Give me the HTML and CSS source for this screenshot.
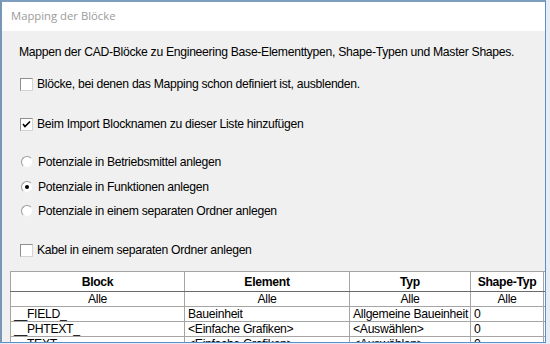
FILE: index.html
```html
<!DOCTYPE html>
<html lang="de">
<head>
  <meta charset="UTF-8" />
  <title>Mapping der Blöcke</title>
  <link rel="stylesheet" href="styles.css">
</head>
<body>
  <div class="window">
    <div class="titlebar">Mapping der Blöcke</div>

    <div class="content">
      <p class="intro">Mappen der CAD-Blöcke zu Engineering Base-Elementtypen, Shape-Typen und Master Shapes.</p>

      <label class="option opt-hide"><span class="checkbox"></span>Blöcke, bei denen das Mapping schon definiert ist, ausblenden.</label>

      <label class="option opt-import">
        <span class="checkbox">
          <svg width="11" height="11" viewBox="0 0 11 11"><path d="M2 5 L4 7.5 L9 2.5" fill="none" stroke="#000" stroke-width="1.6"/></svg>
        </span>Beim Import Blocknamen zu dieser Liste hinzufügen
      </label>

      <label class="option opt-r1"><span class="radio"></span>Potenziale in Betriebsmittel anlegen</label>
      <label class="option opt-r2"><span class="radio checked"></span>Potenziale in Funktionen anlegen</label>
      <label class="option opt-r3"><span class="radio"></span>Potenziale in einem separaten Ordner anlegen</label>

      <label class="option opt-kabel"><span class="checkbox"></span>Kabel in einem separaten Ordner anlegen</label>

      <div class="grid-wrap">
        <table class="grid">
          <colgroup>
            <col style="width:174px">
            <col style="width:165px">
            <col style="width:121px">
            <col style="width:73px">
            <col style="width:80px">
          </colgroup>
          <thead>
            <tr>
              <th>Block</th>
              <th>Element</th>
              <th>Typ</th>
              <th>Shape-Typ</th>
              <th class="cut">Master</th>
            </tr>
          </thead>
          <tbody>
            <tr class="filter">
              <td>Alle</td>
              <td>Alle</td>
              <td>Alle</td>
              <td>Alle</td>
              <td></td>
            </tr>
            <tr>
              <td>__FIELD_</td>
              <td>Baueinheit</td>
              <td>Allgemeine Baueinheit</td>
              <td>0</td>
              <td></td>
            </tr>
            <tr>
              <td>__PHTEXT_</td>
              <td>&lt;Einfache Grafiken&gt;</td>
              <td>&lt;Auswählen&gt;</td>
              <td>0</td>
              <td></td>
            </tr>
            <tr>
              <td>__TEXT_</td>
              <td>&lt;Einfache Grafiken&gt;</td>
              <td>&lt;Auswählen&gt;</td>
              <td>0</td>
              <td></td>
            </tr>
          </tbody>
        </table>
      </div>
    </div>
  </div>
</body>
</html>
```

FILE: styles.css
```css
body {
  margin: 0;
  background-color: #e6edf4;
  font-family: "Liberation Sans", Arial, sans-serif;
  font-size: 12.2px;
  letter-spacing: -0.3px;
  color: #000;
}
.window {
  width: 543px;
  height: 340px;
  border-top: 2px solid #7f9dbd;
  border-left: 2px solid #7896b6;
  border-right: 1px solid #5f8fc2;
  border-bottom: 1px solid #5f8fc2;
  background-color: #f0f0f0;
  overflow: hidden;
}
.titlebar {
  height: 29px;
  line-height: 27px;
  padding-left: 9px;
  background-color: #fff;
  color: #9b9b9b;
  font-family: "Open Sans", sans-serif;
  font-size: 11.3px;
  letter-spacing: 0;
}
.content {
  padding: 13px 0 0 8px;
}
.intro {
  margin: 0 0 0 9px;
  line-height: 16px;
  white-space: nowrap;
}
.option {
  display: flex;
  align-items: center;
  height: 16px;
  margin-left: 10px;
  white-space: nowrap;
}
.opt-hide { margin-top: 16px; }
.opt-import { margin-top: 24px; }
.opt-r1 { margin-top: 22px; }
.opt-r2 { margin-top: 9px; }
.opt-r3 { margin-top: 8px; }
.opt-kabel { margin-top: 23px; }
.checkbox {
  box-sizing: border-box;
  width: 13px;
  height: 13px;
  margin-right: 4px;
  background-color: #fff;
  border: 1px solid #8e8e8e;
  border-right-color: #d4d4d4;
  border-bottom-color: #d4d4d4;
  display: flex;
  align-items: center;
  justify-content: center;
}
.radio {
  box-sizing: border-box;
  width: 12px;
  height: 12px;
  margin: 0 5px 0 1px;
  border-radius: 50%;
  background-color: #fff;
  border: 1px solid #9a9a9a;
  border-right-color: #f0f0f0;
  border-bottom-color: #f0f0f0;
  position: relative;
}
.radio.checked::after {
  content: "";
  position: absolute;
  left: 3px;
  top: 3px;
  width: 4px;
  height: 4px;
  border-radius: 50%;
  background-color: #000;
}
.grid-wrap {
  margin-top: 13px;
  width: 535px;
  overflow: hidden;
}
.grid {
  table-layout: fixed;
  border-collapse: collapse;
  width: 613px;
  background-color: #fff;
  border: 1px solid #6b6b6b;
}
.grid th,
.grid td {
  box-sizing: border-box;
  border: 1px solid #a5a5a5;
  padding: 0 3px;
  white-space: nowrap;
  overflow: hidden;
  line-height: 14px;
  height: 15px;
}
.grid th {
  height: 20px;
  font-weight: bold;
  text-align: center;
  border-bottom-color: #6b6b6b;
}
.grid th.cut {
  text-align: left;
  padding-left: 2px;
}
.grid .filter td {
  text-align: center;
}
```
